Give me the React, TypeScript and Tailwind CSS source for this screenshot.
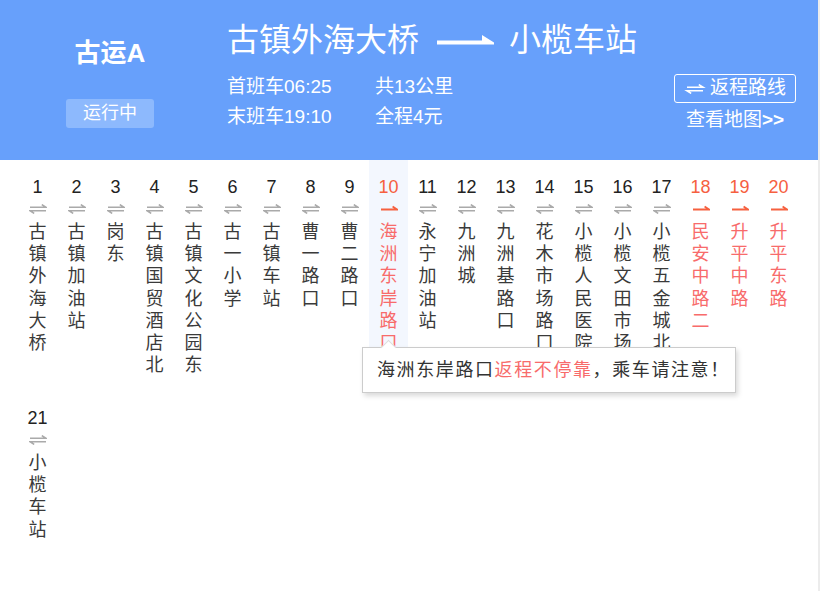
import React from 'react';

type Station = { no: number; name: string; oneWay?: boolean };

const stations: Station[] = [
  { no: 1, name: '古镇外海大桥' },
  { no: 2, name: '古镇加油站' },
  { no: 3, name: '岗东' },
  { no: 4, name: '古镇国贸酒店北' },
  { no: 5, name: '古镇文化公园东' },
  { no: 6, name: '古一小学' },
  { no: 7, name: '古镇车站' },
  { no: 8, name: '曹一路口' },
  { no: 9, name: '曹二路口' },
  { no: 10, name: '海洲东岸路口', oneWay: true },
  { no: 11, name: '永宁加油站' },
  { no: 12, name: '九洲城' },
  { no: 13, name: '九洲基路口' },
  { no: 14, name: '花木市场路口' },
  { no: 15, name: '小榄人民医院' },
  { no: 16, name: '小榄文田市场' },
  { no: 17, name: '小榄五金城北' },
  { no: 18, name: '民安中路二', oneWay: true },
  { no: 19, name: '升平中路', oneWay: true },
  { no: 20, name: '升平东路', oneWay: true },
  { no: 21, name: '小榄车站' },
];

const font = { fontFamily: '"Liberation Sans", "Noto Sans CJK SC", sans-serif' };

function BothWays({ color = '#aaaaaa', w = 18 }: { color?: string; w?: number }) {
  return (
    <svg width={w} height="10" viewBox="0 0 18 10" fill="none" stroke={color} strokeWidth="1.6">
      <path d="M1 3.2H17L12.8 0.6" />
      <path d="M17 6.8H1L5.2 9.4" />
    </svg>
  );
}

function OneWay() {
  return (
    <svg width="18" height="10" viewBox="0 0 18 10" fill="none" stroke="#f6603f" strokeWidth="1.8">
      <path d="M1 5.5H17L12.6 2.6" />
    </svg>
  );
}

function StationCell({ s }: { s: Station }) {
  const active = s.no === 10;
  return (
    <div className={`flex h-[231px] flex-col items-center pt-[16px] ${active ? 'bg-[#f3f7fe]' : ''}`}>
      <div className={`text-[18px] leading-[22px] ${s.oneWay ? 'text-[#f6603f]' : 'text-[#222]'}`}>{s.no}</div>
      <div className="flex h-[22px] items-center">{s.oneWay ? <OneWay /> : <BothWays />}</div>
      <div className={`mt-[1px] flex flex-col items-center text-[18px] leading-[22.2px] ${s.oneWay ? 'text-[#f86b6b]' : 'text-[#3a3a3a]'}`}>
        {s.name.split('').map((c, i) => (
          <span key={i}>{c}</span>
        ))}
      </div>
    </div>
  );
}

export default function App() {
  return (
    <div className="relative h-[591px] w-[822px] overflow-hidden bg-white" style={font}>
      <div className="h-[591px] w-[820px] border-r-2 border-[#ececec]">
        {/* Header */}
        <div className="flex h-[160px] w-[818px] bg-[#67a0fb] text-white">
          <div className="flex w-[220px] flex-col items-center pt-[36px]">
            <div className="text-[26px] font-bold leading-[34px]">古运A</div>
            <div className="mt-[29px] flex h-[29px] w-[88px] items-center justify-center rounded-[3px] bg-[#8db9fd] text-[18px]">
              运行中
            </div>
          </div>

          <div className="flex-1 pl-[7px] pt-[22px]">
            <div className="flex items-center text-[32px] leading-[36px]">
              <span>古镇外海大桥</span>
              <svg className="ml-[18px] mr-[15px]" width="57" height="14" viewBox="0 0 57 14" fill="white">
                <polygon points="0,7.5 45,7.5 45,2 57,9.5 57,11.5 0,11.5" />
              </svg>
              <span>小榄车站</span>
            </div>
            <div className="mt-[14px] grid w-[300px] grid-cols-[148px_1fr] text-[19px] leading-[30px]">
              <span>首班车06:25</span>
              <span>共13公里</span>
              <span>末班车19:10</span>
              <span>全程4元</span>
            </div>
          </div>

          <div className="mr-[22px] flex w-[122px] flex-col items-center pt-[74px]">
            <div className="flex h-[29px] w-[122px] items-center justify-center gap-[4px] rounded-[3px] border border-white text-[19px]">
              <BothWays color="#ffffff" w={22} />
              <span>返程路线</span>
            </div>
            <div className="mt-[3px] text-[19px] leading-[28px]">
              查看地图<span className="font-bold">&gt;&gt;</span>
            </div>
          </div>
        </div>

        {/* Stations */}
        <div className="grid grid-cols-[repeat(20,39px)] pl-[18px]">
          {stations.map((s) => (
            <StationCell key={s.no} s={s} />
          ))}
        </div>
      </div>

      {/* Tooltip */}
      <div className="absolute left-[362px] top-[347px] flex h-[46px] w-[374px] items-center border border-[#cccccc] bg-white pl-[14px] text-[18px] tracking-[1.6px] text-[#333] shadow-[2px_3px_5px_rgba(0,0,0,0.15)]">
        <div className="absolute -top-[6px] left-[20px] h-[11px] w-[11px] rotate-45 border-l border-t border-[#dddddd] bg-white" />
        <span>海洲东岸路口</span>
        <span className="text-[#f86b6b]">返程不停靠</span>
        <span>，乘车请注意！</span>
      </div>
    </div>
  );
}
